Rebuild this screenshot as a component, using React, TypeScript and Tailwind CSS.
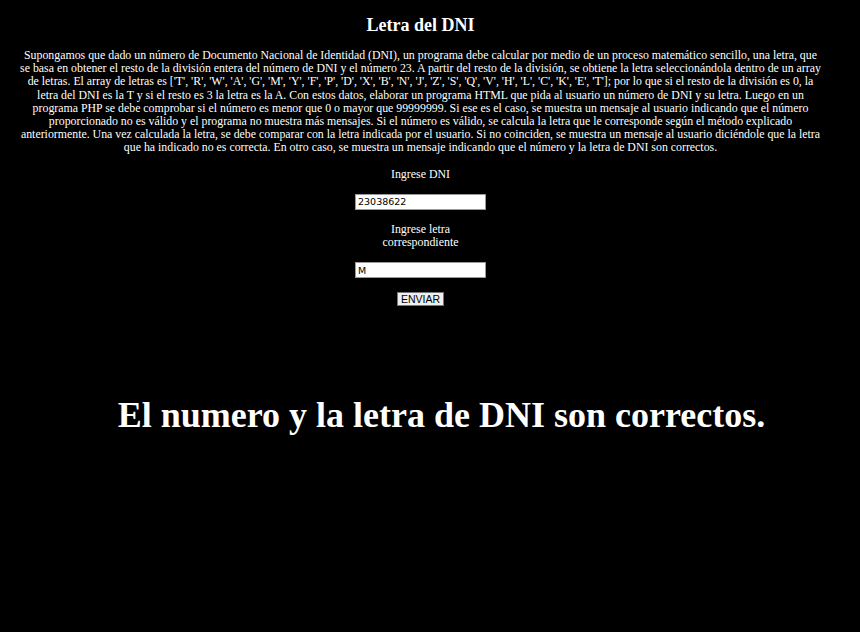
const LINES = [
  'Supongamos que dado un número de Documento Nacional de Identidad (DNI), un programa debe calcular por medio de un proceso matemático sencillo, una letra, que',
  'se basa en obtener el resto de la división entera del número de DNI y el número 23. A partir del resto de la división, se obtiene la letra seleccionándola dentro de un array',
  "de letras. El array de letras es ['T', 'R', 'W', 'A', 'G', 'M', 'Y', 'F', 'P', 'D', 'X', 'B', 'N', 'J', 'Z', 'S', 'Q', 'V', 'H', 'L', 'C', 'K', 'E', 'T']; por lo que si el resto de la división es 0, la",
  'letra del DNI es la T y si el resto es 3 la letra es la A. Con estos datos, elaborar un programa HTML que pida al usuario un número de DNI y su letra. Luego en un',
  'programa PHP se debe comprobar si el número es menor que 0 o mayor que 99999999. Si ese es el caso, se muestra un mensaje al usuario indicando que el número',
  'proporcionado no es válido y el programa no muestra más mensajes. Si el número es válido, se calcula la letra que le corresponde según el método explicado',
  'anteriormente. Una vez calculada la letra, se debe comparar con la letra indicada por el usuario. Si no coinciden, se muestra un mensaje al usuario diciéndole que la letra',
  'que ha indicado no es correcta. En otro caso, se muestra un mensaje indicando que el número y la letra de DNI son correctos.',
];

export default function App() {
  return (
    <div className="min-h-[632px] w-full bg-black text-white font-['Liberation_Serif',serif]">
      <div className="w-[841px] text-center">
        <h2 className="pt-[14px] text-[18px] font-bold leading-[22px]">Letra del DNI</h2>
        <p className="mt-[13px] text-[11.85px] leading-[13.2px]">
          {LINES.map((l, i) => (
            <span key={i} className="block whitespace-nowrap">{l}</span>
          ))}
        </p>
        <form className="mx-auto mt-[13px] flex w-[131px] flex-col items-center text-[11.9px] leading-[13.2px]">
          <label className="block">Ingrese DNI</label>
          <input
            defaultValue="23038622"
            className="mt-[13px] h-[16px] w-[131px] border border-[#999] bg-white px-[2px] text-left font-['DejaVu_Sans',sans-serif] text-[9.5px] text-black outline-none"
          />
          <label className="mt-[13px] block">Ingrese letra correspondiente</label>
          <input
            defaultValue="M"
            className="mt-[13px] h-[16px] w-[131px] border border-[#999] bg-white px-[2px] text-left font-['DejaVu_Sans',sans-serif] text-[9.5px] text-black outline-none"
          />
          <button
            type="button"
            className="mt-[14px] h-[14px] border border-[#767676] bg-[#efefef] px-[3px] font-['Liberation_Sans',sans-serif] text-[10.5px] leading-[12px] text-black"
          >
            ENVIAR
          </button>
        </form>
        <h1 className="mt-[89px] pl-[42px] text-[36px] font-bold leading-[40px]">El numero y la letra de DNI son correctos.</h1>
      </div>
    </div>
  );
}
